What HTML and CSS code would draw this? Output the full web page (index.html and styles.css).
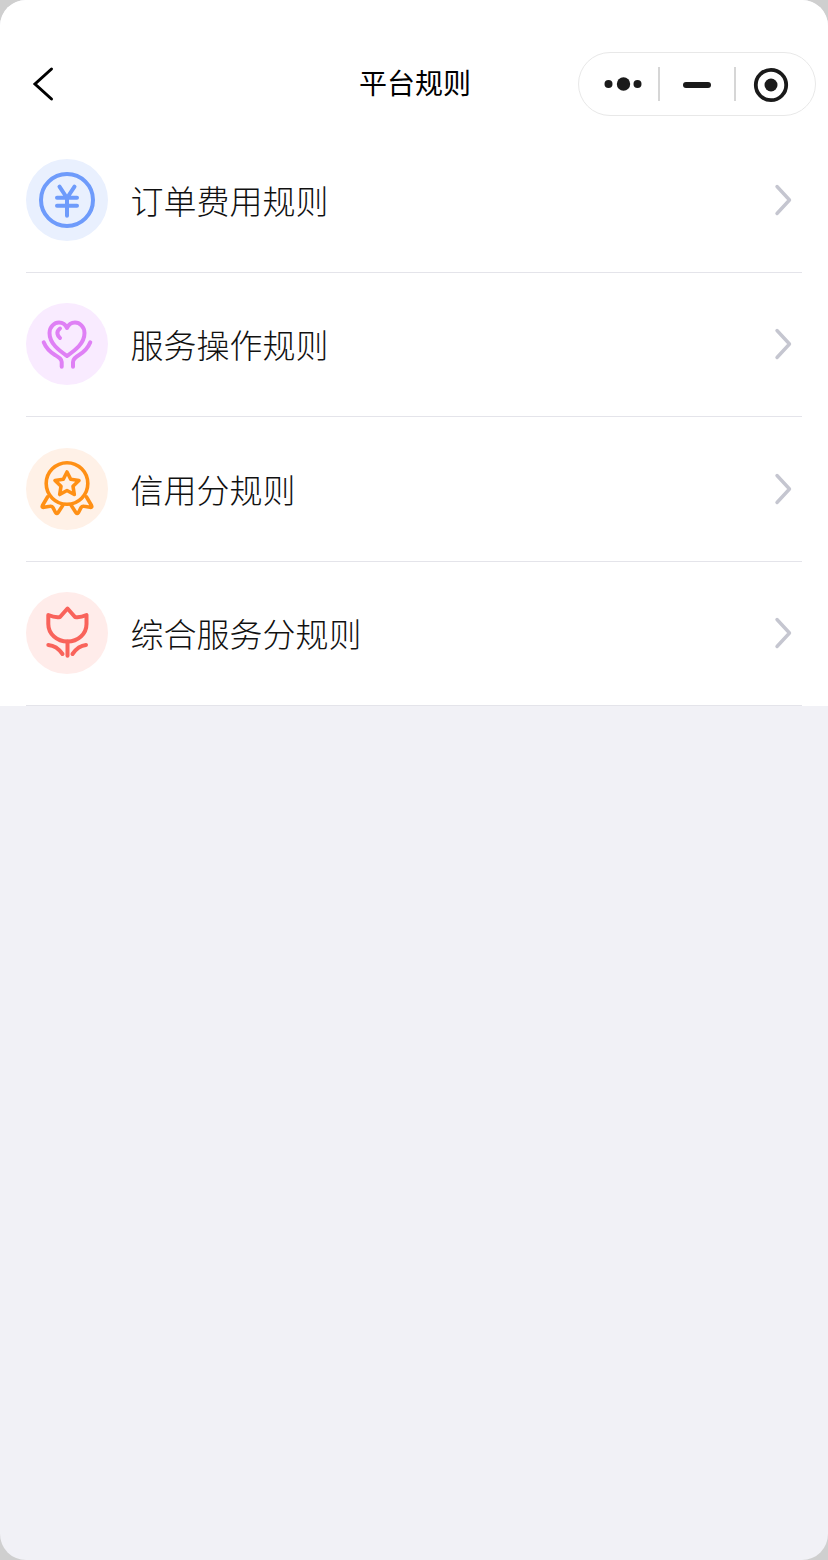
FILE: index.html
```html
<!DOCTYPE html>
<html lang="zh-CN">
<head>
<meta charset="utf-8">
<title>平台规则</title>
<link rel="stylesheet" href="styles.css">
</head>
<body>
<div class="phone">
  <div class="top">
    <header class="nav">
      <div class="nav-left">
        <svg class="back" width="24" height="36" viewBox="0 0 24 36"><path d="M19.500 3 L3 18 L19.500 33" fill="none" stroke="#000" stroke-width="3" stroke-linecap="round" stroke-linejoin="miter"/></svg>
      </div>
      <h1 class="title">平台规则</h1>
      <div class="nav-right">
        <div class="capsule">
          <div class="cap-cell cap-more">
            <svg width="40" height="16" viewBox="0 0 40 16"><circle cx="4.500" cy="8" r="4" fill="#1a1a1a"/><circle cx="19.500" cy="8" r="6.700" fill="#1a1a1a"/><circle cx="33.500" cy="8" r="4" fill="#1a1a1a"/></svg>
          </div>
          <div class="cap-sep"></div>
          <div class="cap-cell cap-min"><span class="dash"></span></div>
          <div class="cap-sep"></div>
          <div class="cap-cell cap-close">
            <svg width="36" height="36" viewBox="0 0 36 36"><circle cx="18" cy="18" r="15.200" fill="none" stroke="#1a1a1a" stroke-width="3.800"/><circle cx="18" cy="18" r="6.500" fill="#1a1a1a"/></svg>
          </div>
        </div>
      </div>
    </header>
    <ul class="list">
      <li class="row">
        <div class="badge badge-blue">
          <svg width="82" height="82" viewBox="0 0 82 82" fill="none" stroke="#6e9bfb" stroke-width="4" stroke-linecap="round" stroke-linejoin="round"><circle cx="41" cy="41" r="26"/><path d="M33.500 27.700 L41 39 L48.500 27.700 M31 38.700 H51 M31 46.700 H51 M41 39 V56.700"/></svg>
        </div>
        <span class="label">订单费用规则</span>
        <svg class="chev" width="20" height="34" viewBox="0 0 20 34"><path d="M4 3.500 L16.500 17 L4 30.500" fill="none" stroke="#c5c6d0" stroke-width="3.400" stroke-linecap="round" stroke-linejoin="round"/></svg>
      </li>
      <li class="row">
        <div class="badge badge-purple">
          <svg width="82" height="82" viewBox="0 0 82 82" fill="none" stroke="#df80f5" stroke-width="4" stroke-linecap="round" stroke-linejoin="round"><path d="M41 53 C34 48 23.500 41 23.500 30 C23.500 23.500 28.500 19.500 33 19.500 C36.500 19.500 39.500 21.500 41 25 C42.500 21.500 45.500 19.500 49 19.500 C53.500 19.500 58.500 23.500 58.500 30 C58.500 41 48 48 41 53 Z"/><path d="M34 25.500 C32 27 31 29 31.500 31 C31.800 32.500 32.800 34 34 35"/><path d="M17.700 39.300 C20 45 24 49 29 52 C33 54.500 35.700 56 35.700 59 V63.700"/><path d="M64.300 39.300 C62 45 58 49 53 52 C49 54.500 47 56 47 59 V63.700"/></svg>
        </div>
        <span class="label">服务操作规则</span>
        <svg class="chev" width="20" height="34" viewBox="0 0 20 34"><path d="M4 3.500 L16.500 17 L4 30.500" fill="none" stroke="#c5c6d0" stroke-width="3.400" stroke-linecap="round" stroke-linejoin="round"/></svg>
      </li>
      <li class="row">
        <div class="badge badge-orange">
          <svg width="82" height="82" viewBox="0 0 82 82" fill="none" stroke="#ff9015" stroke-width="3.600" stroke-linecap="round" stroke-linejoin="round"><circle cx="41" cy="35.500" r="20.800"/><path d="M41 24 L44.700 31.200 L53 32.500 L47 38.200 L48.300 46.500 L41 42.500 L33.700 46.500 L35 38.200 L29 32.500 L37.300 31.200 Z"/><path d="M21.500 49 L16.500 57.500 C15.800 58.800 16.500 59.500 18 59.300 L24 58.300 C25.500 58 26.300 58.500 27 59.700 L29.500 64.500 C30.200 65.800 31.200 65.800 32 64.700 L36.700 57.500"/><path d="M60.500 49 L65.500 57.500 C66.200 58.800 65.500 59.500 64 59.300 L58 58.300 C56.500 58 55.700 58.500 55 59.700 L52.500 64.500 C51.800 65.800 50.800 65.800 50 64.700 L45.300 57.500"/></svg>
        </div>
        <span class="label">信用分规则</span>
        <svg class="chev" width="20" height="34" viewBox="0 0 20 34"><path d="M4 3.500 L16.500 17 L4 30.500" fill="none" stroke="#c5c6d0" stroke-width="3.400" stroke-linecap="round" stroke-linejoin="round"/></svg>
      </li>
      <li class="row">
        <div class="badge badge-red">
          <svg width="82" height="82" viewBox="0 0 82 82" fill="none" stroke="#f9635b" stroke-width="4" stroke-linecap="round" stroke-linejoin="round"><path d="M22.300 23 C27 25 31 25.500 34 25 L41.500 16.500 L49 25 C52 25.500 56 25 60.500 23 V32 C60.500 42 52 49.500 41.500 49.500 C31 49.500 22.300 42 22.300 32 Z"/><path d="M41.500 49.500 V63.700"/><path d="M22.300 53 C28 53.500 33 57 36.500 62"/><path d="M60 53 C54 53.500 50 57 46.500 62"/></svg>
        </div>
        <span class="label">综合服务分规则</span>
        <svg class="chev" width="20" height="34" viewBox="0 0 20 34"><path d="M4 3.500 L16.500 17 L4 30.500" fill="none" stroke="#c5c6d0" stroke-width="3.400" stroke-linecap="round" stroke-linejoin="round"/></svg>
      </li>
    </ul>
  </div>
</div>
</body>
</html>
```

FILE: styles.css
```css
* { box-sizing: border-box; }
html, body { margin: 0; padding: 0; }
body {
  width: 828px;
  height: 1560px;
  background: #cfcfcf;
  font-family: "Noto Sans CJK SC", "Noto Sans", sans-serif;
  overflow: hidden;
}
.phone {
  height: 1560px;
  background: #f1f1f6;
  border-radius: 26px;
  overflow: hidden;
}
.top { background: #fff; }
.nav {
  display: grid;
  grid-template-columns: 1fr 110px 1fr;
  align-items: center;
  height: 128px;
  padding: 52px 0 12px;
}
.nav-left { display: flex; align-items: center; padding-left: 32px; }
.back { display: block; }
.title {
  margin: 0;
  font-size: 28px;
  font-weight: 400;
  line-height: 60px;
  height: 64px;
  text-align: center;
  white-space: nowrap;
  color: #000;
}
.nav-right { display: flex; justify-content: flex-end; padding-right: 12px; }
.capsule {
  display: flex;
  align-items: center;
  width: 238px;
  height: 64px;
  border: 1px solid #e8e8e8;
  border-radius: 32px;
  background: #fff;
}
.cap-cell { display: flex; align-items: center; justify-content: center; height: 100%; }
.cap-cell svg { display: block; }
.cap-more { width: 79px; padding-left: 11px; }
.cap-min { width: 74px; padding-top: 2px; }
.cap-close { flex: 1; padding-right: 9px; padding-top: 2px; }
.cap-sep { width: 2px; height: 34px; background: #d6d6d6; }
.dash { display: block; width: 28px; height: 6px; border-radius: 3px; background: #1a1a1a; }
.list { margin: 0; padding: 0 26px; list-style: none; }
.row {
  display: flex;
  align-items: center;
  height: 144.500px;
  border-bottom: 1px solid #e4e4ea;
}
.badge { width: 82px; height: 82px; border-radius: 50%; flex: none; }
.badge svg { display: block; }
.badge-blue { background: #e9f0fe; }
.badge-purple { background: #f9ebff; }
.badge-orange { background: #fff1e7; }
.badge-red { background: #ffecea; }
.label {
  flex: 1;
  margin-left: 22.500px;
  font-size: 33px;
  font-weight: 300;
  color: #111;
  line-height: 46px;
}
.chev { display: block; flex: none; margin-right: 9px; }
```
